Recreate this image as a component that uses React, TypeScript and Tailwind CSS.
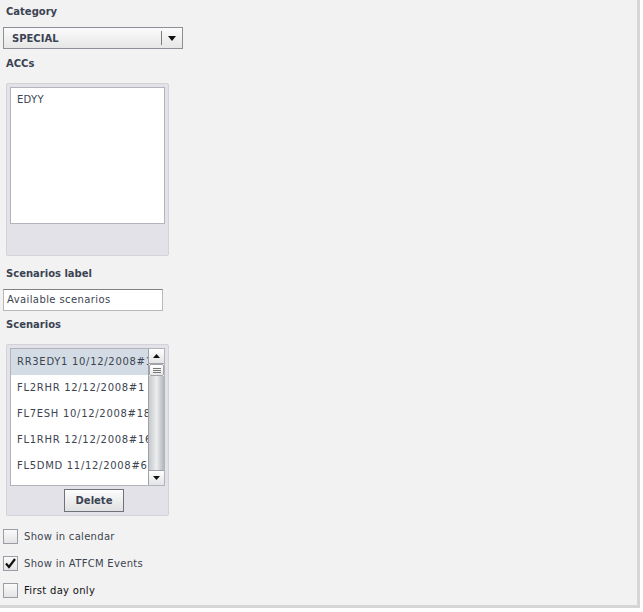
import React from "react";

const font = { fontFamily: '"DejaVu Sans", Verdana, sans-serif' };

function Label({ children, className = "" }: { children: React.ReactNode; className?: string }) {
  return (
    <div className={`text-[10px] leading-[12px] font-bold text-[#3a4352] ${className}`}>{children}</div>
  );
}

function Checkbox({ checked, label, dark }: { checked?: boolean; label: string; dark?: boolean }) {
  return (
    <div className="flex items-center h-[16px]">
      <div className="w-[15px] h-[15px] border border-[#9a9ea4] bg-gradient-to-b from-[#fafafa] to-[#e4e4e6] flex items-center justify-center">
        {checked && (
          <svg width="13" height="13" viewBox="0 0 13 13">
            <path d="M2 6.5 L5 10 L11 2" stroke="#111" strokeWidth="2.2" fill="none" />
          </svg>
        )}
      </div>
      <span className={`ml-[6px] text-[10px] tracking-[0.3px] ${dark ? "text-[#111]" : "text-[#3c4450]"}`}>{label}</span>
    </div>
  );
}

export default function App() {
  const rows = [
    "RR3EDY1 10/12/2008#1",
    "FL2RHR 12/12/2008#1",
    "FL7ESH 10/12/2008#18",
    "FL1RHR 12/12/2008#16",
    "FL5DMD 11/12/2008#6",
  ];
  return (
    <div className="w-[643px] h-[612px] bg-white" style={font}>
      <div className="w-[640px] h-[608px] border-r-[3px] border-b-[3px] border-[#d6d6d6] bg-[#f2f2f2] flex flex-col">
        <Label className="ml-[6px] mt-[6px]">Category</Label>
        <div className="ml-[3px] mt-[9px] w-[180px] h-[22px] border border-[#8c9096] bg-gradient-to-b from-[#fbfbfb] to-[#e6e6e6] flex items-center">
          <span className="ml-[8px] text-[10px] font-bold text-[#3a4352] flex-1">SPECIAL</span>
          <div className="w-px h-[14px] bg-[#7a7e84]" />
          <div className="w-[20px] flex justify-center">
            <svg width="8" height="5" viewBox="0 0 8 5">
              <path d="M0 0 H8 L4 5 Z" fill="#111" />
            </svg>
          </div>
        </div>
        <Label className="ml-[6px] mt-[9px]">ACCs</Label>
        <div className="ml-[6px] mt-[13px] w-[163px] h-[173px] rounded-[2px] border border-[#d2d2d8] bg-[#e2e2e8] p-[3px]">
          <div className="w-[155px] h-[137px] border border-[#b2b4bc] bg-white px-[6px] pt-[4px]">
            <div className="text-[10px] tracking-[0.3px] text-[#3c4655]">EDYY</div>
          </div>
        </div>
        <Label className="ml-[6px] mt-[12px]">Scenarios label</Label>
        <div className="ml-[3px] mt-[9px] w-[160px] h-[22px] border border-[#b8b8b8] border-t-[#808080] bg-white flex items-center">
          <span className="ml-[3px] text-[10px] tracking-[0.4px] text-[#3c4450] -mt-[2px]">Available scenarios</span>
        </div>
        <Label className="ml-[6px] mt-[8px]">Scenarios</Label>
        <div className="ml-[6px] mt-[13px] w-[163px] h-[172px] rounded-[2px] border border-[#d2d2d8] bg-[#e2e2e8] p-[3px] flex flex-col">
          <div className="w-[155px] h-[138px] border border-[#b2b4bc] bg-white flex overflow-hidden">
            <div className="flex-1 overflow-hidden">
              {rows.map((r, i) => (
                <div
                  key={r}
                  className={`h-[26px] flex items-center pl-[6px] pb-[2px] whitespace-nowrap text-[10px] tracking-[0.7px] text-[#3c4450] ${i === 0 ? "bg-[#d3dce4]" : ""}`}
                >
                  {r}
                </div>
              ))}
            </div>
            <div className="w-[16px] flex flex-col border-l border-[#9ea2a8]">
              <div className="h-[15px] bg-gradient-to-b from-white to-[#e2e4e6] border-b border-[#a0a4aa] flex items-center justify-center">
                <svg width="7" height="4" viewBox="0 0 7 4"><path d="M0 4 H7 L3.5 0 Z" fill="#111" /></svg>
              </div>
              <div className="h-[12px] bg-gradient-to-b from-white to-[#e6e6e6] border border-[#a0a4aa] rounded-[2px] flex flex-col items-center justify-center gap-[1px]">
                <div className="w-[8px] h-px bg-[#777]" />
                <div className="w-[8px] h-px bg-[#777]" />
                <div className="w-[8px] h-px bg-[#777]" />
              </div>
              <div className="flex-1 bg-gradient-to-r from-[#c6c9cc] via-[#eceeef] to-[#b2b6ba]" />
              <div className="h-[15px] bg-gradient-to-b from-white to-[#e2e4e6] border-t border-[#a0a4aa] flex items-center justify-center">
                <svg width="7" height="4" viewBox="0 0 7 4"><path d="M0 0 H7 L3.5 4 Z" fill="#111" /></svg>
              </div>
            </div>
          </div>
          <div className="flex mt-[3px] pl-[54px]">
            <div className="w-[60px] h-[23px] border border-[#6e737a] bg-gradient-to-b from-[#fdfdfd] to-[#e0e0e0] flex items-center justify-center text-[10px] font-bold text-[#3a4352]">
              Delete
            </div>
          </div>
        </div>
        <div className="ml-[3px] mt-[12px] flex flex-col gap-[11px]">
          <Checkbox label="Show in calendar" />
          <Checkbox label="Show in ATFCM Events" checked />
          <Checkbox label="First day only" dark />
        </div>
      </div>
    </div>
  );
}
